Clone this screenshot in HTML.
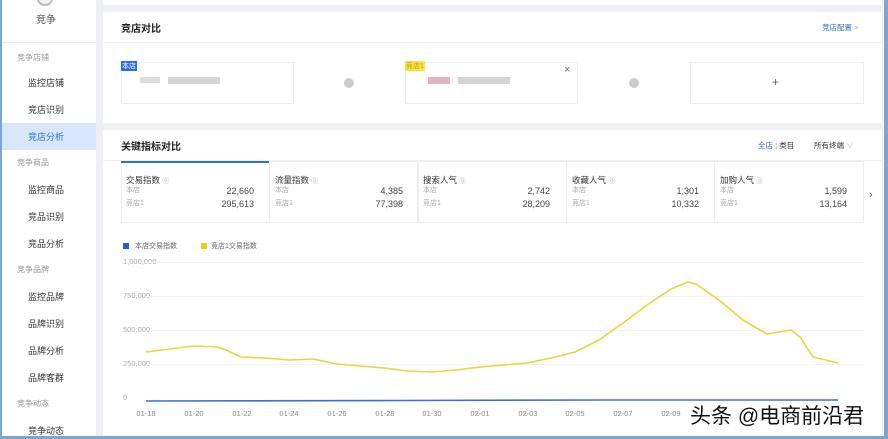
<!DOCTYPE html>
<html><head><meta charset="utf-8"><style>
*{margin:0;padding:0;box-sizing:border-box}
body{width:888px;height:439px;overflow:hidden;background:#eef0f4;font-family:"Liberation Sans","Noto Sans CJK SC",sans-serif;position:relative;color:#333}
.a{position:absolute;white-space:nowrap}
.side{left:0;top:0;width:96px;height:439px;background:#fff;border-left:2px solid #7aa6d6}
.g{font-size:8px;color:#999;left:17px}
.it{font-size:9px;color:#333;left:28px}
.panel{background:#fff;left:103px;width:779px}
.t{font-size:10px;font-weight:bold;color:#222}
.s{font-size:7px;color:#aaa;line-height:9px}
.n{font-size:9px;color:#444;text-align:right;line-height:11px}
.k{font-size:8.5px;color:#333}
.y{font-size:7.5px;color:#aaa;left:123px}
.x{font-size:7.5px;color:#888;width:30px;text-align:center}
.card{border:1px solid #eceef2;height:62px;top:161px;width:149px}
</style></head><body>
<div class="a side"></div>
<div class="a" style="left:37px;top:-8px;width:16px;height:14px;border:2px solid #bbb;border-radius:50%;background:#f2f2f2"></div>
<div class="a" style="left:36px;top:11px;font-size:10px;color:#555">竞争</div>
<div class="a" style="left:2px;top:42px;width:94px;height:1px;background:#eee"></div>
<div class="a g" style="top:52px">竞争店铺</div>
<div class="a it" style="top:76px">监控店铺</div>
<div class="a it" style="top:103px">竞店识别</div>
<div class="a" style="left:2px;top:123px;width:94px;height:27px;background:#d7e6fb"></div>
<div class="a it" style="top:130px;color:#2b6fd8">竞店分析</div>
<div class="a g" style="top:157px">竞争商品</div>
<div class="a it" style="top:183px">监控商品</div>
<div class="a it" style="top:210px">竞品识别</div>
<div class="a it" style="top:237px">竞品分析</div>
<div class="a g" style="top:264px">竞争品牌</div>
<div class="a it" style="top:290px">监控品牌</div>
<div class="a it" style="top:317px">品牌识别</div>
<div class="a it" style="top:344px">品牌分析</div>
<div class="a it" style="top:371px">品牌客群</div>
<div class="a g" style="top:398px">竞争动态</div>
<div class="a it" style="top:424px">竞争动态</div>

<div class="a panel" style="top:0;height:5px"></div>
<div class="a panel" style="top:12px;height:111px"></div>
<div class="a t" style="left:121px;top:20px">竞店对比</div>
<div class="a" style="left:822px;top:22px;font-size:7.5px;color:#2b6fd8">竞店配置 <span style="color:#999">&gt;</span></div>
<div class="a" style="left:103px;top:42px;width:779px;height:1px;background:#eef0f3"></div>
<div class="a" style="left:121px;top:62px;width:173px;height:42px;border:1px solid #eceef2"></div>
<div class="a" style="left:121px;top:61px;font-size:7px;color:#fff;background:#2b6fd8;padding:0 1px">本店</div>
<div class="a" style="left:140px;top:77px;width:20px;height:6px;background:#ddd"></div>
<div class="a" style="left:168px;top:77px;width:52px;height:7px;background:#d5d5d5"></div>
<div class="a" style="left:344px;top:78px;width:10px;height:10px;border-radius:50%;background:#ccc"></div>
<div class="a" style="left:405px;top:62px;width:173px;height:42px;border:1px solid #eceef2"></div>
<div class="a" style="left:405px;top:61px;font-size:7px;color:#c9a400;background:#f8e14a;padding:0 1px">竞店1</div>
<div class="a" style="left:564px;top:64px;font-size:11px;color:#777">×</div>
<div class="a" style="left:428px;top:77px;width:22px;height:7px;background:#e3b3bd"></div>
<div class="a" style="left:458px;top:77px;width:52px;height:7px;background:#d5d5d5"></div>
<div class="a" style="left:629px;top:78px;width:10px;height:10px;border-radius:50%;background:#ccc"></div>
<div class="a" style="left:690px;top:62px;width:174px;height:42px;border:1px solid #eceef2"></div>
<div class="a" style="left:772px;top:75px;font-size:12px;color:#666">+</div>

<div class="a panel" style="top:130px;height:307px"></div>
<div class="a t" style="left:121px;top:138px">关键指标对比</div>
<div class="a" style="left:758px;top:140px;font-size:7.5px;color:#2b6fd8">全店 <span style="color:#aaa">|</span> <span style="color:#333">类目</span></div>
<div class="a" style="left:814px;top:140px;font-size:7.5px;color:#333">所有终端 <span style="color:#ccc">∨</span></div>
<div class="a" style="left:103px;top:160px;width:779px;height:1px;background:#eef0f3"></div>

<div class="a card" style="left:121px"></div>
<div class="a card" style="left:269px"></div>
<div class="a card" style="left:418px"></div>
<div class="a card" style="left:566px"></div>
<div class="a card" style="left:714px;width:150px"></div>
<div class="a" style="left:121px;top:161px;width:148px;height:2px;background:#2b6fd8"></div>
<div class="a k" style="left:126px;top:174px">交易指数 <span style="color:#bbb;font-size:7px">⓪</span></div>
<div class="a s" style="left:126px;top:186px">本店</div><div class="a s" style="left:126px;top:199px">竞店1</div>
<div class="a n" style="left:200px;top:186px;width:54px">22,660</div><div class="a n" style="left:200px;top:199px;width:54px">295,613</div>
<div class="a k" style="left:275px;top:174px">流量指数 <span style="color:#bbb;font-size:7px">⓪</span></div>
<div class="a s" style="left:275px;top:186px">本店</div><div class="a s" style="left:275px;top:199px">竞店1</div>
<div class="a n" style="left:349px;top:186px;width:54px">4,385</div><div class="a n" style="left:349px;top:199px;width:54px">77,398</div>
<div class="a k" style="left:423px;top:174px">搜索人气 <span style="color:#bbb;font-size:7px">⓪</span></div>
<div class="a s" style="left:423px;top:186px">本店</div><div class="a s" style="left:423px;top:199px">竞店1</div>
<div class="a n" style="left:496px;top:186px;width:54px">2,742</div><div class="a n" style="left:496px;top:199px;width:54px">28,209</div>
<div class="a k" style="left:572px;top:174px">收藏人气 <span style="color:#bbb;font-size:7px">⓪</span></div>
<div class="a s" style="left:572px;top:186px">本店</div><div class="a s" style="left:572px;top:199px">竞店1</div>
<div class="a n" style="left:645px;top:186px;width:54px">1,301</div><div class="a n" style="left:645px;top:199px;width:54px">10,332</div>
<div class="a k" style="left:720px;top:174px">加购人气 <span style="color:#bbb;font-size:7px">⓪</span></div>
<div class="a s" style="left:720px;top:186px">本店</div><div class="a s" style="left:720px;top:199px">竞店1</div>
<div class="a n" style="left:793px;top:186px;width:54px">1,599</div><div class="a n" style="left:793px;top:199px;width:54px">13,164</div>
<div class="a" style="left:869px;top:189px;font-size:11px;color:#666">›</div>

<div class="a" style="left:123px;top:243px;width:6px;height:6px;background:#2b5fd0"></div>
<div class="a" style="left:135px;top:241px;font-size:7px;color:#666">本店交易指数</div>
<div class="a" style="left:201px;top:243px;width:6px;height:6px;background:#f2cc1c"></div>
<div class="a" style="left:211px;top:241px;font-size:7px;color:#666">竞店1交易指数</div>

<div class="a y" style="top:257px">1,000,000</div>
<div class="a y" style="top:291px">750,000</div>
<div class="a y" style="top:325px">500,000</div>
<div class="a y" style="top:359px">250,000</div>
<div class="a y" style="top:393px">0</div>
<svg class="a" style="left:0;top:0" width="888" height="439">
<g stroke="#f2f2f2" stroke-width="1"><line x1="146" y1="262.5" x2="865" y2="262.5"/><line x1="146" y1="296.5" x2="865" y2="296.5"/><line x1="146" y1="330.5" x2="865" y2="330.5"/><line x1="146" y1="364.5" x2="865" y2="364.5"/></g>
<polyline fill="none" stroke="#f0d23a" stroke-width="1.6" stroke-linejoin="round" points="146,352 170,349 194,346 218,347 226,350 241,357 265,358 289,360 313,359 337,364 360,366 384,368 408,371 432,372 456,370 480,367 504,365 527,363 551,358 575,352 599,340 623,323 647,305 671,289 688,282 696,284 719,300 743,320 767,334 791,330 800,337 813,357 838,363"/>
<polyline fill="none" stroke="#3b6fd8" stroke-width="1.6" points="146,401 400,400.5 600,400 838,400"/>
</svg>
<div class="a x" style="left:131px;top:409px">01-18</div>
<div class="a x" style="left:179px;top:409px">01-20</div>
<div class="a x" style="left:227px;top:409px">01-22</div>
<div class="a x" style="left:274px;top:409px">01-24</div>
<div class="a x" style="left:322px;top:409px">01-26</div>
<div class="a x" style="left:370px;top:409px">01-28</div>
<div class="a x" style="left:417px;top:409px">01-30</div>
<div class="a x" style="left:465px;top:409px">02-01</div>
<div class="a x" style="left:513px;top:409px">02-03</div>
<div class="a x" style="left:560px;top:409px">02-05</div>
<div class="a x" style="left:608px;top:409px">02-07</div>
<div class="a x" style="left:656px;top:409px">02-09</div>
<div class="a" style="left:690px;top:400px;font-size:21px;color:#111;text-shadow:0 0 2px #fff,0 0 2px #fff">头条 @电商前沿君</div>
<div class="a" style="left:883px;top:0;width:5px;height:439px;background:#7aa6d6;border-left:1px solid #fff"></div>
<div class="a" style="left:0;top:436px;width:888px;height:3px;background:#7aa6d6"></div>
</body></html>
